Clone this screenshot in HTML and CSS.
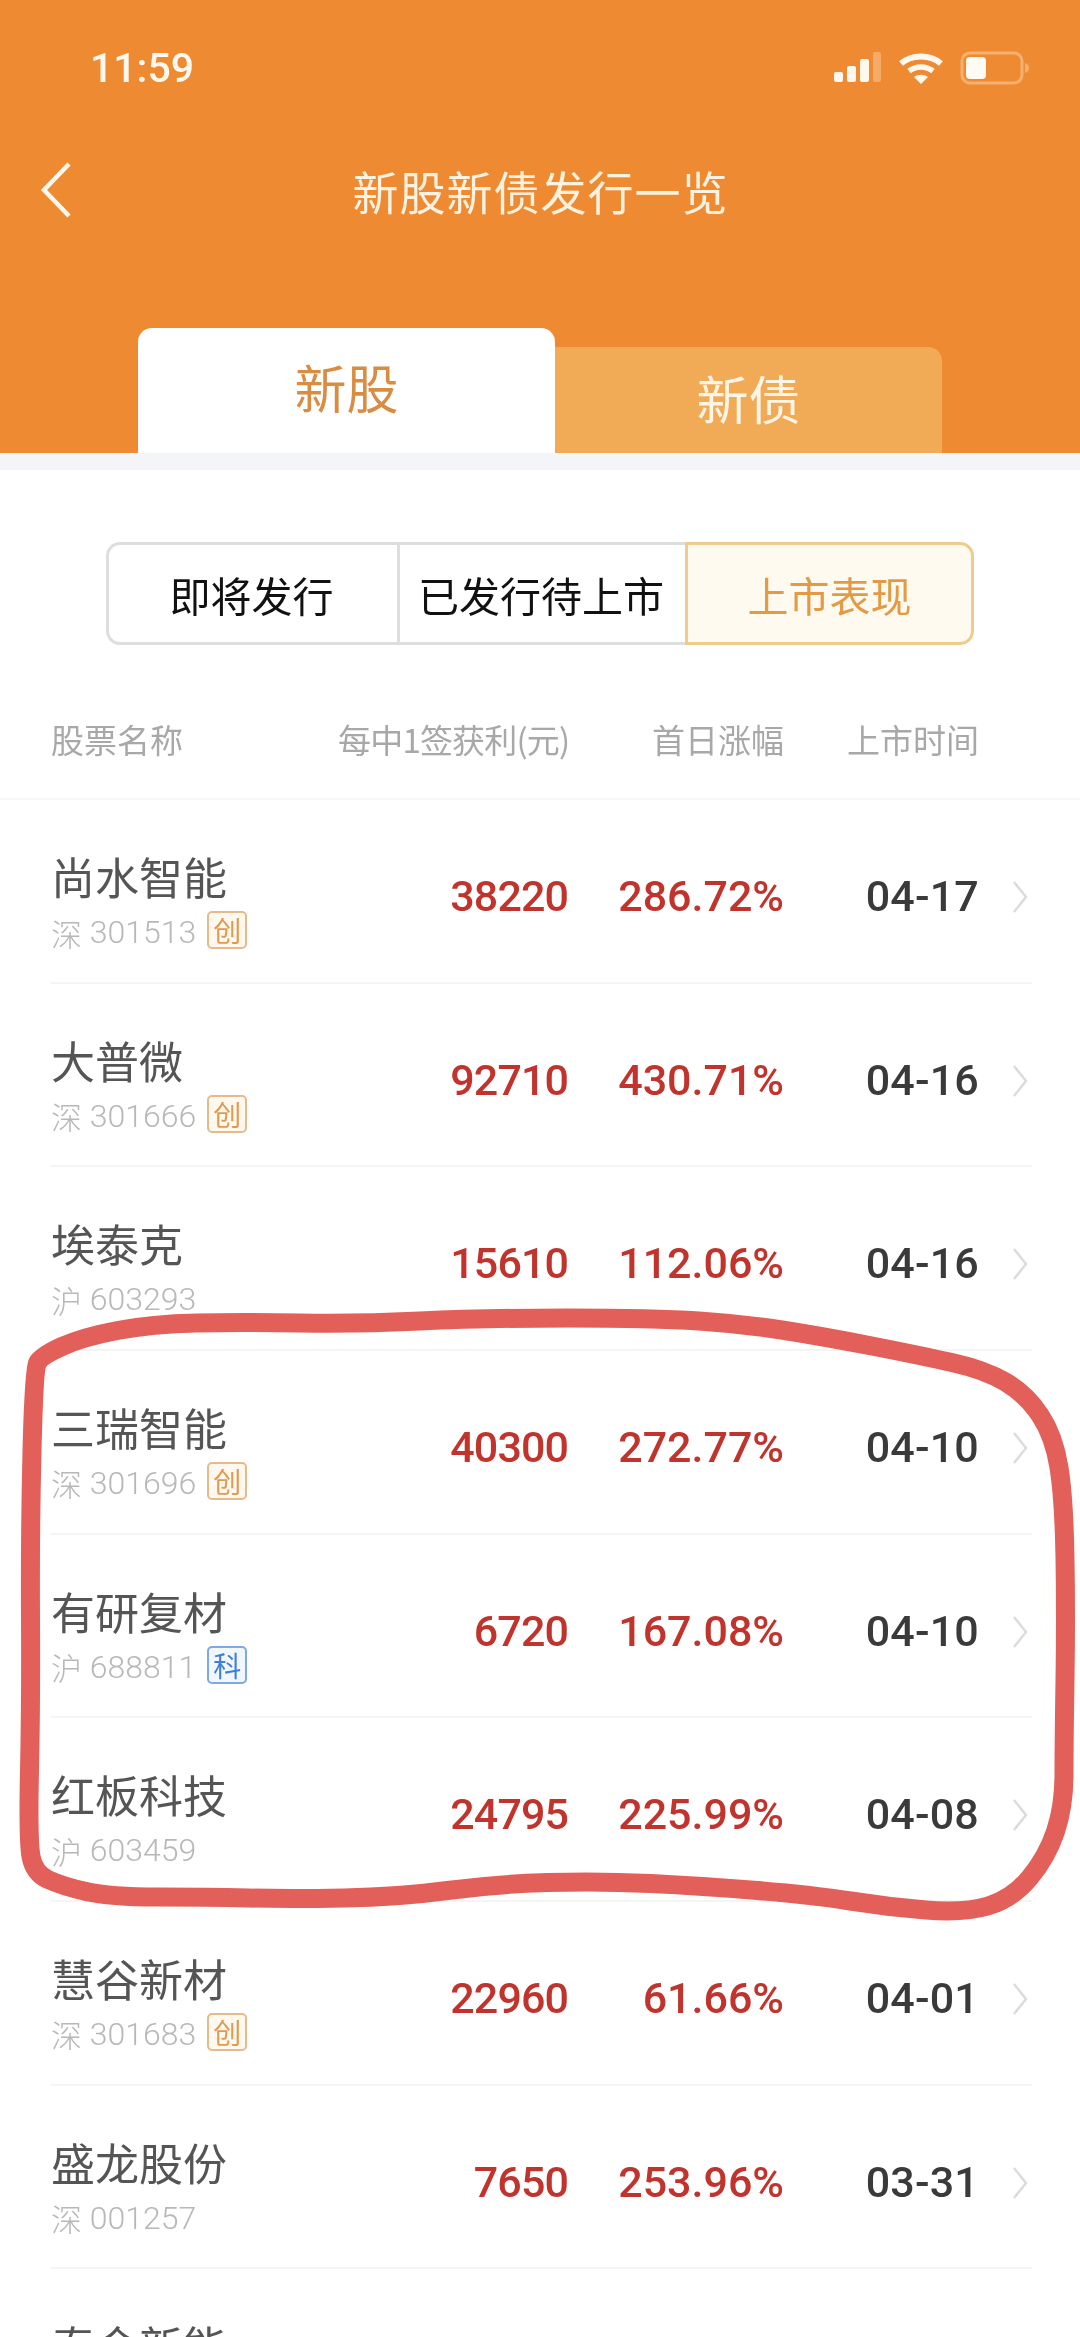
FILE: index.html
```html
<!DOCTYPE html>
<html lang="zh-CN">
<head>
<meta charset="utf-8">
<title>新股新债发行一览</title>
<link rel="stylesheet" href="styles.css">
</head>
<body>
<div class="page">
  <header class="header">
    <div class="status">
      <span class="time">11:59</span>
      <div class="status-icons">
        <svg class="i-signal" width="48" height="32" viewBox="0 0 48 32"><rect x="0" y="20" width="9" height="10" rx="2" fill="#fff8ee"/><rect x="13" y="14" width="9" height="16" rx="2" fill="#fff8ee"/><rect x="26" y="7" width="9" height="23" rx="2" fill="#fff8ee"/><rect x="39" y="0" width="8" height="30" rx="2" fill="#f4ab68"/></svg>
        <svg class="i-wifi" width="46" height="32" viewBox="0 0 46 32"><path d="M3 11.5C14 2 32 2 43 11.5" fill="none" stroke="#fff8ee" stroke-width="6"/><path d="M11 19C18 13.500 28 13.500 35 19" fill="none" stroke="#fff8ee" stroke-width="5.500"/><path d="M16 25C20 22 26 22 30 25L23 32Z" fill="#fff8ee"/></svg>
        <svg class="i-batt" width="70" height="34" viewBox="0 0 70 34"><rect x="2" y="2" width="60" height="30" rx="8" fill="none" stroke="#f6b06f" stroke-width="3"/><rect x="6" y="6" width="20" height="22" rx="4" fill="#fffaf3"/><path d="M65 12C68 13 69 15 69 17C69 19 68 21 65 22Z" fill="#f6b06f"/></svg>
      </div>
    </div>
    <div class="nav">
      <svg class="back" width="32" height="56" viewBox="0 0 32 56"><path d="M29 2L4 28L29 54" fill="none" stroke="#fff8ee" stroke-width="4.500"/></svg>
      <h1 class="title">新股新债发行一览</h1>
    </div>
    <div class="tabs">
      <div class="tab tab-on">新股</div>
      <div class="tab tab-off">新债</div>
    </div>
  </header>
  <div class="strip"></div>

  <div class="seg">
    <div class="seg-item">即将发行</div>
    <div class="seg-item">已发行待上市</div>
    <div class="seg-item seg-on">上市表现</div>
  </div>

  <div class="head">
    <div class="grid">
      <span>股票名称</span>
      <span class="r tight">每中1签获利(元)</span>
      <span class="r">首日涨幅</span>
      <span class="r">上市时间</span>
    </div>
  </div>

  <div class="list">
    <div class="grid row">
      <div class="stock"><div class="name">尚水智能</div><div class="code"><span class="mkt">深</span> 301513<span class="badge chuang">创</span></div></div>
      <div class="val amt r">38220</div><div class="val r">286.72%</div><div class="date r">04-17</div>
      <svg class="chev" width="16" height="32" viewBox="0 0 16 32"><path d="M2 1L14 16L2 31" fill="none" stroke="#dcdcdc" stroke-width="2.500"/></svg>
    </div>
    <div class="grid row">
      <div class="stock"><div class="name">大普微</div><div class="code"><span class="mkt">深</span> 301666<span class="badge chuang">创</span></div></div>
      <div class="val amt r">92710</div><div class="val r">430.71%</div><div class="date r">04-16</div>
      <svg class="chev" width="16" height="32" viewBox="0 0 16 32"><path d="M2 1L14 16L2 31" fill="none" stroke="#dcdcdc" stroke-width="2.500"/></svg>
    </div>
    <div class="grid row">
      <div class="stock"><div class="name">埃泰克</div><div class="code"><span class="mkt">沪</span> 603293</div></div>
      <div class="val amt r">15610</div><div class="val r">112.06%</div><div class="date r">04-16</div>
      <svg class="chev" width="16" height="32" viewBox="0 0 16 32"><path d="M2 1L14 16L2 31" fill="none" stroke="#dcdcdc" stroke-width="2.500"/></svg>
    </div>
    <div class="grid row">
      <div class="stock"><div class="name">三瑞智能</div><div class="code"><span class="mkt">深</span> 301696<span class="badge chuang">创</span></div></div>
      <div class="val amt r">40300</div><div class="val r">272.77%</div><div class="date r">04-10</div>
      <svg class="chev" width="16" height="32" viewBox="0 0 16 32"><path d="M2 1L14 16L2 31" fill="none" stroke="#dcdcdc" stroke-width="2.500"/></svg>
    </div>
    <div class="grid row">
      <div class="stock"><div class="name">有研复材</div><div class="code"><span class="mkt">沪</span> 688811<span class="badge ke">科</span></div></div>
      <div class="val amt r">6720</div><div class="val r">167.08%</div><div class="date r">04-10</div>
      <svg class="chev" width="16" height="32" viewBox="0 0 16 32"><path d="M2 1L14 16L2 31" fill="none" stroke="#dcdcdc" stroke-width="2.500"/></svg>
    </div>
    <div class="grid row">
      <div class="stock"><div class="name">红板科技</div><div class="code"><span class="mkt">沪</span> 603459</div></div>
      <div class="val amt r">24795</div><div class="val r">225.99%</div><div class="date r">04-08</div>
      <svg class="chev" width="16" height="32" viewBox="0 0 16 32"><path d="M2 1L14 16L2 31" fill="none" stroke="#dcdcdc" stroke-width="2.500"/></svg>
    </div>
    <div class="grid row">
      <div class="stock"><div class="name">慧谷新材</div><div class="code"><span class="mkt">深</span> 301683<span class="badge chuang">创</span></div></div>
      <div class="val amt r">22960</div><div class="val r">61.66%</div><div class="date r">04-01</div>
      <svg class="chev" width="16" height="32" viewBox="0 0 16 32"><path d="M2 1L14 16L2 31" fill="none" stroke="#dcdcdc" stroke-width="2.500"/></svg>
    </div>
    <div class="grid row">
      <div class="stock"><div class="name">盛龙股份</div><div class="code"><span class="mkt">深</span> 001257</div></div>
      <div class="val amt r">7650</div><div class="val r">253.96%</div><div class="date r">03-31</div>
      <svg class="chev" width="16" height="32" viewBox="0 0 16 32"><path d="M2 1L14 16L2 31" fill="none" stroke="#dcdcdc" stroke-width="2.500"/></svg>
    </div>
    <div class="grid row">
      <div class="stock"><div class="name">泰金新能</div></div>
    </div>
  </div>

  <svg class="scribble" width="1080" height="2337" viewBox="0 0 1080 2337"><path d="M37.500 1363Q41 1356 62 1346.500Q83 1337 117.500 1330.500Q152 1324 196.500 1323Q241 1322 299.500 1323Q358 1324 420 1321Q482 1318 568 1318Q654 1318 699 1321Q744 1324 785 1330.500Q826 1337 874.500 1346.500Q923 1356 954 1363Q985 1370 1005.500 1382Q1026 1394 1040 1415Q1054 1436 1059 1467.500Q1064 1499 1065 1558Q1066 1617 1065 1680Q1064 1743 1064 1774.500Q1064 1806 1055.500 1831.500Q1047 1857 1029.500 1878Q1012 1899 988 1906Q964 1913 926 1910Q888 1907 850.500 1901Q813 1895 757.500 1890.500Q702 1886 650.500 1883.500Q599 1881 547.500 1882.500Q496 1884 447.500 1890.500Q399 1897 344 1898Q289 1899 248 1898Q207 1897 158.500 1897Q110 1897 86 1891.500Q62 1886 48 1879.500Q34 1873 31 1856.500Q28 1840 29.500 1770.500Q31 1701 30.500 1616.500Q30 1532 32 1451Q34 1370 37.500 1363Z" fill="none" stroke="#e35f5a" stroke-width="19" stroke-linejoin="round"/></svg>
</div>
</body>
</html>
```
FILE: styles.css
```css
* { box-sizing: border-box; margin: 0; padding: 0; }
html, body { background: #fff; }
body { font-family: "Noto Sans CJK SC", "Noto Sans", sans-serif; }
.page { position: relative; width: 1080px; height: 2337px; overflow: hidden; background: #fff; filter: blur(0.5px); }

.header { height: 453px; background: #ee8a32; display: flex; flex-direction: column; }
.status { height: 136px; display: flex; align-items: center; justify-content: space-between; padding: 0 50px 0 90px; }
.time { font-family: Roboto, sans-serif; font-weight: 500; font-size: 41px; color: #fff8ee; }
.status-icons { display: flex; align-items: center; gap: 16px; }
.nav { height: 110px; display: grid; grid-template-columns: 1fr auto 1fr; align-items: center; padding: 0 40px 3px; }
.back { justify-self: start; }
.title { font-size: 46px; font-weight: 400; color: #fdf1e0; letter-spacing: 1px; line-height: 60px; margin-left: 1px; }
.tabs { margin-top: auto; display: flex; align-items: flex-end; padding-left: 138px; }
.tab { display: flex; align-items: center; justify-content: center; font-size: 52px; }
.tab-on { width: 417px; height: 125px; background: #fff; color: #d98d42; border-radius: 14px 14px 0 0; padding-bottom: 8px; }
.tab-off { width: 387px; height: 106px; background: #f1aa55; color: #fff5e6; border-radius: 0 14px 0 0; padding-bottom: 5px; }
.strip { height: 17px; background: #f4f5f9; }

.seg { display: grid; grid-template-columns: 291px 288px 289px; width: 868px; height: 103px; margin: 72px 0 0 106px; }
.seg-item { display: flex; align-items: center; justify-content: center; padding-right: 3px; font-size: 41px; color: #111; border: 3px solid #dedede; border-right: 0; white-space: nowrap; }
.seg-item:first-child { border-radius: 14px 0 0 14px; }
.seg-on { color: #e39a45; background: #fffaf0; border: 3px solid #efcb8e; border-radius: 0 14px 14px 0; padding-right: 0; }

.head { height: 155px; padding: 67px 48px 32px 51px; border-bottom: 2px solid #f8f8f8; font-size: 33px; line-height: 54px; color: #a8a8a8; white-space: nowrap; }
.grid { display: grid; grid-template-columns: 287px 230px 216px 195px 53px; }
.r { text-align: right; }
.tight { letter-spacing: -0.8px; }

.list { padding: 0 48px 0 51px; }
.row { height: 183.67px; border-bottom: 2px solid #f4f4f4; align-items: start; }
.stock { padding-top: 48px; grid-column: 1; }
.name { font-size: 44px; line-height: 56px; color: #555; white-space: nowrap; }
.code { display: flex; align-items: center; height: 56px; font-family: Roboto, sans-serif; font-weight: 300; font-size: 32px; color: #b8b8b8; white-space: pre; }
.mkt { font-family: "Noto Sans CJK SC", sans-serif; font-size: 31px; }
.badge { display: flex; align-items: center; justify-content: center; width: 40px; height: 38px; margin: 0 0 4px 11px; border-radius: 5px; font-family: "Noto Sans CJK SC", sans-serif; font-weight: 400; font-size: 28px; }
.chuang { color: #e09a50; background: #fff8ef; border: 2px solid #e6bb8c; }
.ke { color: #3f7fd8; background: #f2f7fe; border: 2px solid #7ea9e2; }
.val, .date { padding-top: 68px; font-family: Roboto, sans-serif; font-weight: 500; font-size: 43px; line-height: 56px; }
.val { color: #c0342d; }
.amt { letter-spacing: -0.9px; }
.date { color: #3a3a3a; letter-spacing: 0.2px; }
.chev { margin: 81px 0 0 33px; }

.scribble { position: absolute; left: 0; top: 0; pointer-events: none; }
```
